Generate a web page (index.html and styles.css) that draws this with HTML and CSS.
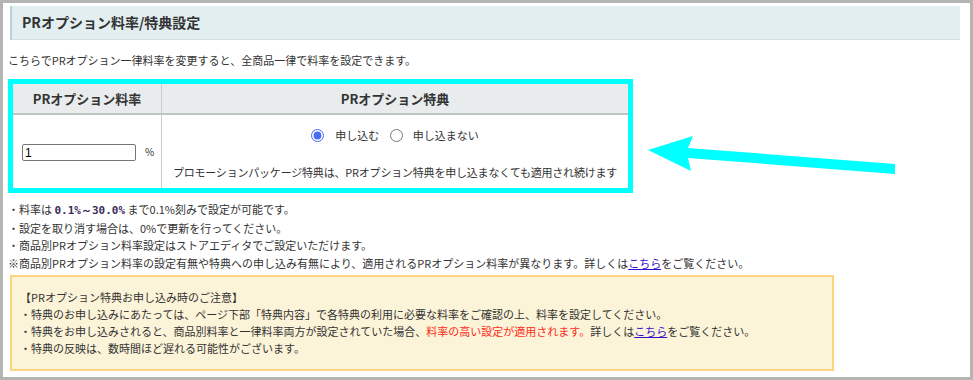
FILE: index.html
```html
<!DOCTYPE html>
<html lang="ja">
<head>
    <meta charset="UTF-8">
    <meta name="viewport" content="width=device-width, initial-scale=1.0">
    <title>PRオプション料率/特典設定</title>
    <link rel="stylesheet" href="styles.css">
</head>
<body>
    <div class="frame">
        <div class="page">
            <h2 class="section-title">PRオプション料率/特典設定</h2>
            <p class="lead">こちらでPRオプション一律料率を変更すると、全商品一律で料率を設定できます。</p>

            <div class="highlight">
                <table class="pr-table">
                    <tr>
                        <th class="col-rate">PRオプション料率</th>
                        <th>PRオプション特典</th>
                    </tr>
                    <tr>
                        <td class="col-rate">
                            <input type="text" class="rate-input" value="1"><span class="unit">%</span>
                        </td>
                        <td class="col-benefit">
                            <div class="radios">
                                <label class="radio"><input type="radio" name="benefit" checked>申し込む</label>
                                <label class="radio"><input type="radio" name="benefit">申し込まない</label>
                            </div>
                            <div class="benefit-note">プロモーションパッケージ特典は、PRオプション特典を申し込まなくても適用され続けます</div>
                        </td>
                    </tr>
                </table>
            </div>

            <ul class="notes">
                <li>・料率は <b class="range">0.1%～30.0%</b> まで0.1%刻みで設定が可能です。</li>
                <li>・設定を取り消す場合は、0%で更新を行ってください。</li>
                <li>・商品別PRオプション料率設定はストアエディタでご設定いただけます。</li>
                <li>※商品別PRオプション料率の設定有無や特典への申し込み有無により、適用されるPRオプション料率が異なります。詳しくは<a href="#">こちら</a>をご覧ください。</li>
            </ul>

            <div class="caution">
                <p>【PRオプション特典お申し込み時のご注意】</p>
                <p>・特典のお申し込みにあたっては、ページ下部「特典内容」で各特典の利用に必要な料率をご確認の上、料率を設定してください。</p>
                <p>・特典をお申し込みされると、商品別料率と一律料率両方が設定されていた場合、<span class="alert">料率の高い設定が適用されます。</span>詳しくは<a href="#">こちら</a>をご覧ください。</p>
                <p>・特典の反映は、数時間ほど遅れる可能性がございます。</p>
            </div>
        </div>

        <svg class="arrow" viewBox="0 0 973 380" xmlns="http://www.w3.org/2000/svg">
            <polygon points="648,150 693,136 688,148 895,164 895,174 688,158 691,171" fill="#00ffff"/>
        </svg>
    </div>
</body>
</html>
```

FILE: styles.css
```css
body {
    margin: 0;
    padding: 0;
    font-family: "Noto Sans CJK JP", "Noto Sans", sans-serif;
    font-size: 11px;
    color: #333;
    background-color: #fff;
}

.frame {
    position: relative;
    width: 973px;
    height: 380px;
    box-sizing: border-box;
    border: 3px solid #b4b4b4;
    overflow: hidden;
}

.page {
    padding: 3px 10px 0 5px;
}

.section-title {
    margin: 0 0 0 2px;
    height: 33px;
    line-height: 33px;
    padding-left: 10px;
    font-size: 14px;
    font-weight: bold;
    color: #333;
    background-color: #e2eef0;
    border-left: 2px solid #b3d1e2;
    border-bottom: 1px solid #cde0e3;
}

.lead {
    margin: 12px 0 0;
    line-height: 17px;
}

.highlight {
    margin-top: 10px;
    width: 625px;
    box-sizing: border-box;
    border: 5px solid #00ffff;
}

.pr-table {
    width: 100%;
    table-layout: fixed;
    border-collapse: collapse;
}

.pr-table th {
    height: 29px;
    padding: 0;
    font-size: 13px;
    font-weight: bold;
    color: #333;
    background-color: #e8ecec;
    border-bottom: 2px solid #bfc5c5;
}

.pr-table .col-rate {
    width: 148px;
    border-right: 1px solid #c9cdcd;
}

.pr-table td {
    height: 73px;
    padding: 0;
}

td.col-rate {
    padding-left: 9px;
    vertical-align: middle;
}

.rate-input {
    width: 114px;
    height: 17px;
    box-sizing: border-box;
    margin: 2px 0 0;
    padding: 0 2px;
    border: 1px solid #767676;
    border-radius: 2px;
    font-family: "Liberation Sans", sans-serif;
    font-size: 12px;
    color: #000;
    vertical-align: middle;
}

.unit {
    margin-left: 9px;
    font-size: 10px;
    vertical-align: middle;
}

.col-benefit {
    text-align: center;
    vertical-align: top;
}

.radios {
    margin-top: 12px;
    line-height: 17px;
}

.radio {
    display: inline-flex;
    align-items: center;
}

.radio input {
    width: 13px;
    height: 13px;
    margin: 0 11px 0 0;
    accent-color: #4a6cf0;
}

.radio + .radio {
    margin-left: 8px;
}

.radio + .radio input {
    margin-right: 10px;
}

.benefit-note {
    margin-top: 18px;
    line-height: 17px;
    letter-spacing: -0.2px;
}

.notes {
    list-style: none;
    margin: 8px 0 0;
    padding: 0;
    line-height: 17.5px;
}

.range {
    color: #3a2c5c;
    font-family: "DejaVu Sans Mono", monospace;
    font-size: 11px;
}

a {
    color: #3311cc;
    text-decoration: underline;
}

.caution {
    margin: 3px 0 0 2px;
    width: 824px;
    box-sizing: border-box;
    padding: 12px 0 12px 8px;
    background-color: #fcf4d8;
    border: 2px solid #fcd47f;
}

.caution p {
    margin: 0;
    line-height: 17px;
}

.alert {
    color: #ff2a1a;
}

.arrow {
    position: absolute;
    left: -3px;
    top: -3px;
    width: 973px;
    height: 380px;
    pointer-events: none;
}
```
